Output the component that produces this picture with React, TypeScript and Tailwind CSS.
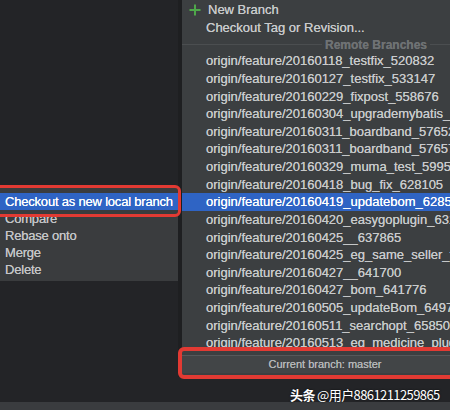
const branches = [
  'origin/feature/20160118_testfix_520832',
  'origin/feature/20160127_testfix_533147',
  'origin/feature/20160229_fixpost_558676',
  'origin/feature/20160304_upgrademybatis_559012',
  'origin/feature/20160311_boardband_576521',
  'origin/feature/20160311_boardband_576574',
  'origin/feature/20160329_muma_test_599512',
  'origin/feature/20160418_bug_fix_628105',
  'origin/feature/20160419_updatebom_628561',
  'origin/feature/20160420_easygoplugin_631204',
  'origin/feature/20160425__637865',
  'origin/feature/20160425_eg_same_seller_fix_637990',
  'origin/feature/20160427__641700',
  'origin/feature/20160427_bom_641776',
  'origin/feature/20160505_updateBom_649751',
  'origin/feature/20160511_searchopt_658502',
  'origin/feature/20160513_eg_medicine_plugin_661022',
];

const actions = ['Checkout as new local branch', 'Compare', 'Rebase onto', 'Merge', 'Delete'];

const font = { fontFamily: '"Liberation Sans", Arial, sans-serif' };

export default function App() {
  return (
    <div
      className="relative w-[450px] h-[410px] overflow-hidden bg-[#232427] flex flex-col [text-shadow:0_0_0.6px_currentColor]"
      style={font}
    >
      <div className="flex h-[377px]">
        {/* left submenu column */}
        <div className="w-[178px] shrink-0 pt-[188px]">
          <div className="bg-[#3a3c3e] pt-[5px] pb-[3px]">
            {actions.map((a, i) => (
              <div
                key={a}
                className={`h-[17px] flex items-center pl-[5px] text-[13px] tracking-[-0.2px] whitespace-nowrap ${
                  i === 0 ? 'bg-[#2f64c4] text-white' : 'text-[#c3c5c7]'
                }`}
              >
                {a}
              </div>
            ))}
          </div>
        </div>
        <div className="w-[4px] shrink-0 bg-[#1e1f21]" />

        {/* branch popup */}
        <div className="flex-1 min-w-0 bg-[#3c3f41] flex flex-col pt-[1px] pb-[4px]">
          <div className="h-[18px] flex items-center whitespace-nowrap text-[13px] text-[#c8cacb]">
            <svg width="22" height="14" viewBox="0 0 22 14" className="ml-[5px] mr-[-3px]">
              <path d="M8 1.5v11M2.5 7h11" stroke="#4ea84a" strokeWidth="2" />
            </svg>
            <span className="ml-[2px]">New Branch</span>
          </div>
          <div className="h-[18px] flex items-center pl-[24px] whitespace-nowrap text-[13px] text-[#c8cacb]">
            Checkout Tag or Revision...
          </div>
          <div className="h-[15.2px] flex items-center">
            <div className="w-[140px] shrink-0 h-px bg-[#4b4e50]" />
            <span className="px-[3px] text-[12px] font-bold text-[#6f7274] whitespace-nowrap">
              Remote Branches
            </span>
            <div className="flex-1 h-px bg-[#4b4e50]" />
          </div>
          <div className="flex-1 overflow-hidden">
            {branches.map((b, i) => (
              <div
                key={b}
                className={`h-[17.625px] flex items-center pl-[24px] whitespace-nowrap text-[13px] ${
                  i === 8 ? 'bg-[#2f64c4] text-white' : 'text-[#c8cacb]'
                }`}
              >
                {b}
              </div>
            ))}
          </div>
          <div className="h-[18px] shrink-0 flex items-center justify-center pl-[8px] bg-[#424547] border-t border-[#55585a] text-[11px] text-[#b5b7b9] whitespace-nowrap">
            <span className="ml-[10px]">Current branch: master</span>
          </div>
        </div>
      </div>
      <div className="flex-1" />
      <div className="h-[8px] bg-[#3a3c3f]" />

      {/* red highlight boxes */}
      <div className="absolute left-[-6px] top-[185px] w-[187px] h-[32px] border-[3px] border-[#e23a33] rounded-[6px]" />
      <div className="absolute left-[178px] top-[347px] w-[290px] h-[32px] border-[4px] border-[#e23a33] rounded-[6px]" />

      {/* watermark */}
      <div
        className="absolute left-[290px] top-[385px] text-[13px] tracking-[-0.6px] text-white whitespace-nowrap [text-shadow:0_0_2px_rgba(0,0,0,0.8)]"
        style={{ fontFamily: '"Noto Sans CJK SC", "Liberation Sans", sans-serif' }}
      >
        <span className="font-bold">头条</span> @用户8861211259865
      </div>
    </div>
  );
}
